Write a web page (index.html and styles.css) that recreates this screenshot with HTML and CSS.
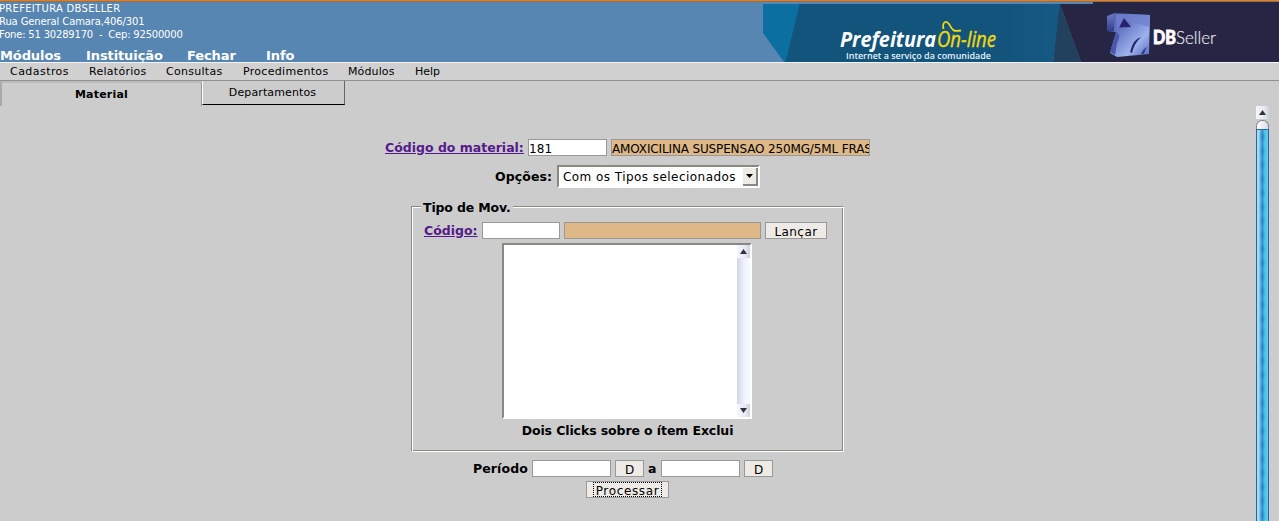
FILE: index.html
```html
<!DOCTYPE html>
<html lang="pt-BR">
<head>
<meta charset="utf-8">
<title>DBSeller</title>
<link rel="stylesheet" href="styles.css">
</head>
<body>
<header class="header">
  <div class="header-info">
    <div class="address">
      <div class="entity">PREFEITURA DBSELLER</div>
      <div class="street">Rua General Camara,406/301</div>
      <div class="phone">Fone: 51 30289170 &nbsp;-&nbsp; Cep: 92500000</div>
    </div>
    <nav class="main-nav"><a class="n1">Módulos</a><a class="n2">Instituição</a><a class="n3">Fechar</a><a>Info</a></nav>
  </div>
  <svg class="banner" width="516" height="60" viewBox="763 2 516 60">
    <defs>
      <linearGradient id="fade" x1="0" x2="1"><stop offset="0" stop-color="#12547c"/><stop offset=".8" stop-color="#12547c"/><stop offset="1" stop-color="#165982"/></linearGradient>
      <linearGradient id="face" x1="0" y1="0" x2="1" y2="1"><stop offset="0" stop-color="#414d9d"/><stop offset=".4" stop-color="#6d80cc"/><stop offset=".7" stop-color="#9db2ec"/><stop offset="1" stop-color="#5365b8"/></linearGradient>
      <linearGradient id="side" x1="0" y1="0" x2="0" y2="1"><stop offset="0" stop-color="#6a78c4"/><stop offset="1" stop-color="#343d8b"/></linearGradient>
      <filter id="soft"><feGaussianBlur stdDeviation=".6"/></filter>
    </defs>
    <path d="M763 4H800L786 62H784L763 33Z" fill="#0b70a1"/>
    <path d="M799.500 4H1061L1053 62H785.500Z" fill="url(#fade)"/>
    <path d="M1060 4L1081 62H1053Z" fill="#21415f"/>
    <path d="M1093 2H1279V62H1081L1060 4H1093Z" fill="#272544"/>
    <text class="brand" x="840" y="47" textLength="96" lengthAdjust="spacingAndGlyphs">Prefeitura</text>
    <text class="online" x="937" y="47" textLength="59" lengthAdjust="spacingAndGlyphs">On-line</text>
    <path d="M943.500 29C942 22 946 20 949 24C953 31 953 31.500 961 30.500" fill="none" stroke="#f2d90c" stroke-width="1.800"/>
    <text class="slogan" x="846" y="59" textLength="145" lengthAdjust="spacingAndGlyphs">Internet a serviço da comunidade</text>
    <g filter="url(#soft)">
      <path d="M1107 16L1114 13L1150 15L1149 54L1117 57L1110 53L1116 32L1107 31Z" fill="url(#face)"/>
      <path d="M1107 16L1114 14V31L1107 31Z" fill="url(#side)"/>
      <path d="M1115 14L1150 15L1149 27L1130 21L1117 29Z" fill="#7181cf" opacity=".8"/>
      <path d="M1124 18L1131 27L1119 27.500Z" fill="#27236f"/>
      <path d="M1116 32Q1122 34 1117 43L1115 55L1110 52Z" fill="#4b59aa"/>
      <path d="M1130 52Q1133 39 1141 37Q1134 44 1132 53Z" fill="#262b72"/>
      <path d="M1141 54Q1143 49 1147 47Q1145 50 1144 54Z" fill="#343d88"/>
    </g>
    <text class="db" x="1153" y="43.500" textLength="23" lengthAdjust="spacingAndGlyphs">DB</text>
    <text class="seller" x="1176" y="43.500" textLength="40" lengthAdjust="spacingAndGlyphs">Seller</text>
  </svg>
</header>
<nav class="menu"><a class="m59">Cadastros</a><a class="m57">Relatórios</a><a class="m57">Consultas</a><a class="m85">Procedimentos</a><a class="m47">Módulos</a><a>Help</a></nav>
<div class="tabs"><div class="tab active">Material</div><div class="tab">Departamentos</div></div>
<main class="main">
  <form class="form">
    <div class="row material">
      <a class="link wide">Código do material:</a>
      <div class="field code w79">181</div>
      <div class="field tan w259">AMOXICILINA SUSPENSAO 250MG/5ML FRASCO</div>
    </div>
    <div class="row options">
      <b class="opt-label">Opções:</b>
      <div class="select"><span>Com os Tipos selecionados</span><i class="drop"><svg width="7" height="4"><path d="M0 0H7L3.500 4Z"/></svg></i></div>
    </div>
    <section class="group">
      <b class="legend">Tipo de Mov.</b>
      <div class="row">
        <a class="link short">Código:</a>
        <div class="field w78"></div>
        <div class="field tan w197"></div>
        <div class="button w62">Lançar</div>
      </div>
      <div class="list"><div class="list-bar"><i class="arrow"><svg width="7" height="5"><path d="M0 5H7L3.500 0Z"/></svg></i><i class="arrow"><svg width="7" height="5"><path d="M0 0H7L3.500 5Z"/></svg></i></div></div>
      <b class="hint">Dois Clicks sobre o ítem Exclui</b>
    </section>
    <div class="row period">
      <b class="period-label">Período</b>
      <div class="field w79"></div>
      <div class="button w29">D</div>
      <b class="until">a</b>
      <div class="field w79"></div>
      <div class="button w29">D</div>
    </div>
    <div class="button process"><span>Processar</span></div>
  </form>
  <div class="scrollbar">
    <i class="arrow"><svg width="7" height="5"><path d="M0 5H7L3.500 0Z"/></svg></i>
    <div class="cap"></div>
    <div class="thumb"></div>
  </div>
</main>
</body>
</html>
```
FILE: styles.css
```css
* { box-sizing: border-box; }
body { margin: 0; height: 521px; overflow: hidden; background: #ccc; color: #000; font-family: "DejaVu Sans", sans-serif; font-size: 12px; }
i { font-style: normal; }
.header { display: flex; justify-content: space-between; height: 63px; background: #5786b2; border-top: 1px solid #cf8436; border-bottom: 1px solid #f4f4f8; box-shadow: inset 0 1px #a66a3c; }
.header-info { padding-top: 1px; color: #fff; margin-left: -1px; }
.address { font-size: 10px; line-height: 13px; white-space: nowrap; height: 44px; }
.entity { letter-spacing: .3px; }
.street { letter-spacing: -.12px; }
.phone { letter-spacing: -.2px; }
.main-nav { display: flex; padding-left: 1px; font-size: 13px; font-weight: bold; line-height: 19px; letter-spacing: -.1px; }
.n1 { width: 86px; }
.n2 { width: 101px; }
.n3 { width: 79px; }
.banner { margin-top: 1px; flex: none; }
.brand { font: italic bold 22px "Open Sans", sans-serif; fill: #fff; }
.online { font: italic 22px "Open Sans", sans-serif; fill: #f2d90c; stroke: #f2d90c; stroke-width: .4; }
.slogan { font: 600 9.500px "Open Sans", sans-serif; fill: #e5f2fa; }
.db { font: 900 18px Lato, sans-serif; fill: #fff; stroke: #fff; stroke-width: .8; }
.seller { font: 300 18px Lato, sans-serif; fill: #e4e4ef; stroke: #e4e4ef; stroke-width: .2; }
.menu { display: flex; gap: 20px; height: 18px; padding-left: 10px; background: #d0d0d0; border-bottom: 1px solid #909090; font-size: 11px; line-height: 17px; }
.m59 { width: 59px; letter-spacing: .45px; }
.m57 { width: 57px; letter-spacing: .28px; }
.m85 { width: 85px; letter-spacing: .3px; }
.m47 { width: 47px; letter-spacing: .12px; }
.tabs { display: flex; height: 25px; }
.tab { width: 143px; height: 24px; border-left: 1px solid #fff; border-right: 1px solid #666; border-bottom: 1px solid #000; text-align: center; font-size: 11px; line-height: 23px; padding-right: 2px; letter-spacing: .12px; }
.tab.active { width: 202px; height: 25px; border: 0 solid #aaa; border-top: 2px solid #bbb; border-left: 2px solid #aaa; border-right: 1px solid #999; font-weight: bold; line-height: 23px; padding: 0; letter-spacing: .2px; }
.main { display: flex; height: 415px; }
.form { width: 1255px; margin: 0; padding-top: 33px; display: flex; flex-direction: column; align-items: center; }
.scrollbar { margin-left: 1px; width: 13px; height: 415px; display: flex; flex-direction: column; }
.row { display: flex; gap: 4px; height: 17px; align-items: center; font-size: 12.500px; line-height: 16px; white-space: nowrap; }
.link { font-weight: bold; color: #551a8b; text-decoration: underline; }
.wide { width: 139px; }
.short { width: 54px; }
.field, .button { height: 17px; flex: none; border: 1px solid #999; background: #fff; overflow: hidden; white-space: nowrap; font-size: 12px; line-height: 18px; }
.code { letter-spacing: .1px; }
.button { text-align: center; background: #eeebe7; }
.tan { background: #deb887; letter-spacing: -.14px; }
.w79 { width: 79px; }
.w259 { width: 259px; }
.w78 { width: 78px; }
.w197 { width: 197px; }
.w62 { width: 62px; letter-spacing: .45px; }
.w29 { width: 29px; }
.options { margin-top: 9px; height: 23px; }
.opt-label { width: 58px; letter-spacing: .1px; }
.select { display: flex; justify-content: space-between; width: 203px; height: 23px; padding-left: 4px; border: 2px solid; border-color: #888a82 #fff #fff #888a82; background: #fff; font-size: 12px; line-height: 20px; letter-spacing: .45px; }
.drop { width: 15px; height: 18px; margin: 1px 0 0; background: #eeebe7; border-right: 2px solid #888; border-bottom: 2px solid #888; display: flex; align-items: center; justify-content: center; }
.group { display: flex; flex-direction: column; align-items: center; width: 433px; height: 246px; margin-top: 18px; padding: 1px; border: 1px solid; border-color: #888a82 #fff #fff #888a82; box-shadow: inset 1px 1px #fff, inset -1px -1px #888a82; font-size: 12.500px; }
.legend { align-self: flex-start; margin: -8px 0 6px 8px; width: 92px; height: 16px; line-height: 16px; padding-left: 2px; background: #ccc; letter-spacing: -.15px; }
.group .row { margin-right: 4px; }
.list { width: 250px; height: 176px; margin: 4px 2px 0 0; display: flex; justify-content: flex-end; background: #fff; border: 2px solid; border-color: #888a82 #fff #fff #888a82; }
.list-bar { width: 13px; display: flex; flex-direction: column; justify-content: space-between; background: linear-gradient(90deg, #d0d6e2, #f1f4ff 60%, #f7f9ff); }
.arrow { display: flex; align-items: center; justify-content: center; width: 13px; height: 13px; flex: none; background: linear-gradient(90deg, #f4f6ff, #e8ebf5 60%, #cdd1dd); fill: #333; }
.hint { margin-top: 4px; line-height: 16px; letter-spacing: -.1px; }
.period { margin: 8px 9px 0 0; }
.period-label { width: 55px; letter-spacing: .1px; }
.until { width: 9px; }
.process { width: 83px; margin-top: 4px; padding: 0 6px; }
.process span { display: block; height: 15px; line-height: 16px; border: 1px dotted #000; letter-spacing: .65px; }
.cap { height: 9px; margin-top: 1px; border: 1px solid #888; border-bottom: 0; border-radius: 6px 6px 0 0; background: linear-gradient(90deg, #fff, #d8dcea); }
.thumb { flex: 1; border: 1px solid #2864a8; border-bottom: 0; background: radial-gradient(ellipse 3px 7px at 50% 50%, #2070c088, transparent) 0 0 / 11px 14px, linear-gradient(90deg, #a5dbed 0 15%, #67b6df 30%, #3095d2 50%, #4ac0e6 65%, #65cae9); }
```
